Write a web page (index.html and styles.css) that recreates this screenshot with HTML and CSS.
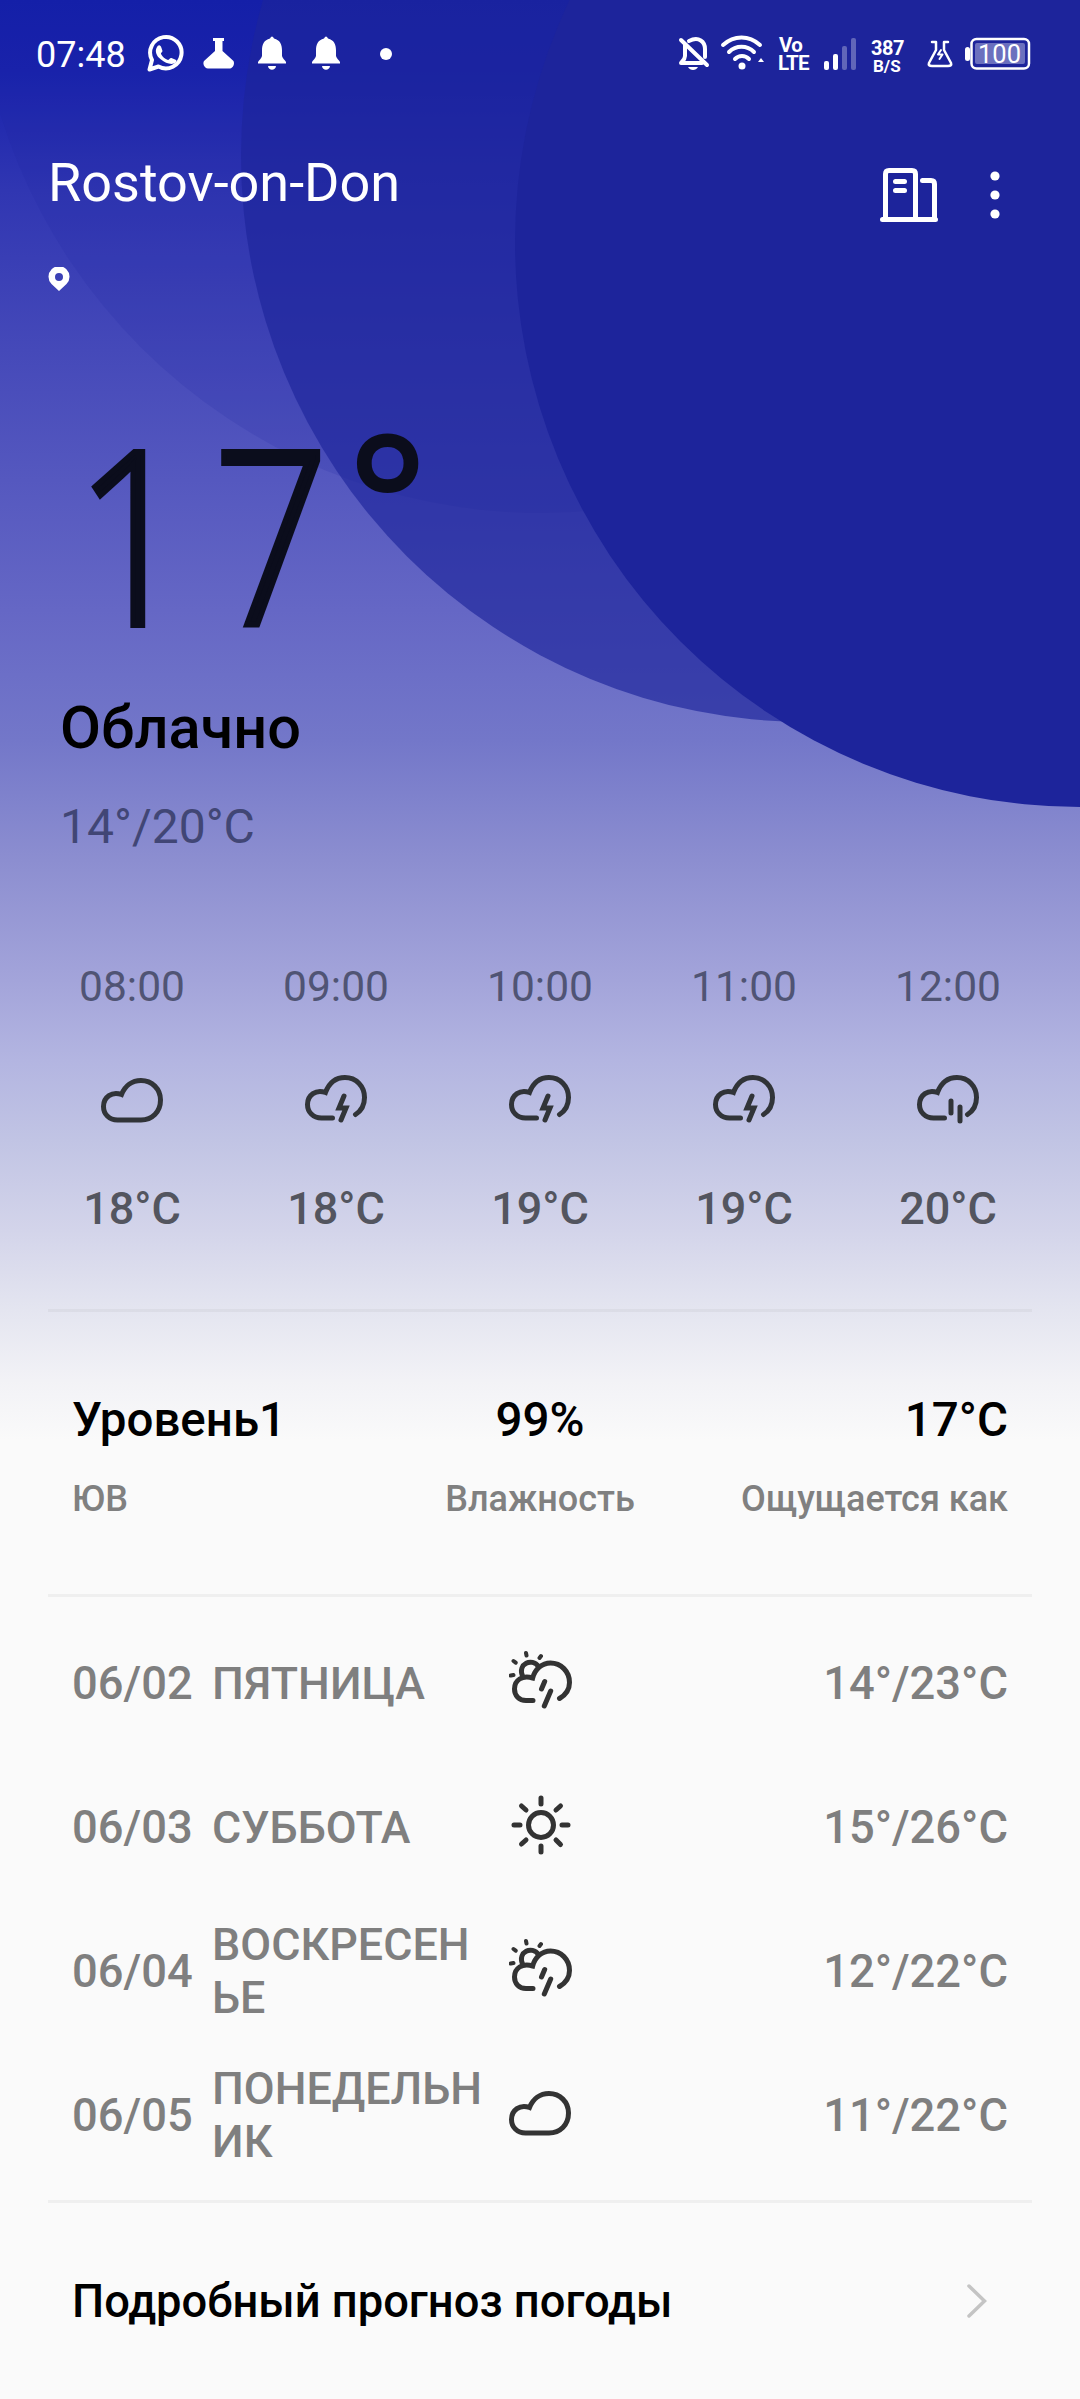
FILE: index.html
```html
<!DOCTYPE html>
<html lang="ru">
<head>
  <meta charset="UTF-8">
  <meta name="viewport" content="width=device-width, initial-scale=1.0">
  <title>Погода</title>
  <link rel="stylesheet" href="styles.css">
</head>
<body>
  <!-- shared weather icons -->
  <svg class="sprite">
    <symbol id="cloud" viewBox="0 0 64 64">
      <path d="M16.500 54 C8 54 2.500 48 2.500 40.500 C2.500 31 11 25 20.500 28.500 C24 20 31 14.500 40 14.500 C51 14.500 59.500 23 59.500 34 C59.500 46 51 54 40 54 Z"/>
    </symbol>
    <symbol id="cloud-open" viewBox="0 0 64 64">
      <path d="M27.500 52H16.500C8 52 2.500 46 2.500 38.500C2.500 29 11 23 20.500 26.500C24 17 31 11.500 40 11.500C51 11.500 59.500 20 59.500 31.500C59.500 39 56 45 50.500 48.500"/>
    </symbol>
    <symbol id="storm" viewBox="0 0 64 64">
      <use href="#cloud-open"/>
      <path d="M39 30l-5 12h7l-5 12"/>
    </symbol>
    <symbol id="rain" viewBox="0 0 64 64">
      <use href="#cloud-open"/>
      <path d="M34 35v12M43 41v14"/>
    </symbol>
    <symbol id="sun-rain" viewBox="0 0 64 64">
      <path d="M24 53.500H17C10 53.500 5.500 48.500 5.500 42C5.500 33 13 28 23.700 31C26 22 33 16 41.500 16C52 16 60.500 24.500 60.500 35.500C60.500 42 56.500 48 50.500 51.500"/>
      <path d="M13.500 29C8.500 16.500 23 10.500 29.500 19.500M35.700 34.500l-3.200 7.500M41.700 44l-6.400 15"/>
      <path class="thin" d="M17 6l.5 2.500M32 9l-1.500 2M4.500 14l2.200 1.700M1.700 28.500l2.800-.5"/>
    </symbol>
    <symbol id="sun" viewBox="0 0 64 64">
      <circle cx="32" cy="34" r="12.500"/>
      <path d="M32 7v6M32 55v6M5 34h6M53 34h6M12.500 15l4.500 4M47 49l4.500 4.500M12.500 53l4.500-4M47 19l4.500-4"/>
    </symbol>
  </svg>

  <div class="app">
    <svg class="bubbles" viewBox="0 0 1080 850">
      <circle class="bubble-far" cx="541" cy="-53" r="566"/>
      <circle class="bubble-mid" cx="807" cy="156" r="566"/>
      <circle class="bubble-near" cx="1080" cy="242" r="565"/>
    </svg>

    <div class="statusbar">
      <span class="clock">07:48</span>
      <svg class="status-left" viewBox="0 0 260 44">
        <path class="line" d="M3.500 37.500l2.500-9.500a15.700 15.700 0 1 1 6.500 6.500z"/>
        <path d="M10.500 16c2-4 4-3 5 0l1 3c0 1-2 2-1.500 3 1.500 3 4 5 7 6 1 0 2-2.500 3.500-2 5 2 6 2 4 4.500-3 3-10 1-14.500-3C10 24 9 19 10.500 16z"/>
        <path d="M67 6h11v3h-1.500v10l11 10c1.500 3-.5 7-3.500 7.500H62c-4-.5-5.500-5-4-7.500l11-10V9h-2z"/>
        <path id="bell" d="M124 6.500q2-4 4 0c6 1.500 8 6 8 12v5c0 3 4 5 4 7v1h-28v-1c0-2 4-4 4-7v-5c0-6 2-10.500 8-12zM122 34h8c-.5 5-7.500 5-8 0z"/>
        <use href="#bell" x="54"/>
        <circle cx="240" cy="22" r="6"/>
      </svg>
      <svg class="status-right" viewBox="0 0 360 48">
        <path class="line" d="M9 13v11c0 4-4 6-4 7h21M13 9c10-5 16 1 16 8v8M5 8l26 25"/>
        <path d="M12 35h10c-2 4-8 4-10 0z"/>
        <path class="line" d="M47 13c11-10 26-10 37 0M53 20c7-7 18-7 25 0M59 27c4-4 10-4 14 0"/>
        <circle cx="66" cy="34" r="3.500"/>
        <path d="M82 30l3-4 3 4z"/>
        <text x="103" y="19.500" class="net">Vo</text>
        <text x="102" y="38" class="net">LTE</text>
        <rect x="148" y="29" width="5" height="9" rx="2"/>
        <rect x="157" y="22" width="5" height="16" rx="2"/>
        <rect class="dim" x="166" y="14" width="5" height="24" rx="2"/>
        <rect class="dim" x="175" y="6" width="5" height="32" rx="2"/>
        <text x="195" y="23" class="speed">387</text>
        <text x="197" y="40" class="unit">B/S</text>
        <path class="line thin" d="M256 10h4v8l-7 13q-1 3 3 3h16q4 0 3-3l-7-13V10h4"/>
        <path class="line spark" d="M265 18l-3 4.500h4.500l-3 4.500"/>
        <rect x="289" y="15" width="5" height="14" rx="2.500"/>
        <rect class="line thin" x="295.500" y="7" width="57.500" height="29.500" rx="5"/>
        <rect class="charge" x="299" y="11" width="50" height="21" rx="2"/>
        <text x="302" y="31" class="level">100</text>
      </svg>
    </div>

    <header class="header">
      <div class="place">
        <h1>Rostov-on-Don</h1>
        <svg class="pin" viewBox="0 0 22 24">
          <path fill-rule="evenodd" d="M11 24L3.500 17A10.500 10.500 0 1 1 18.500 17ZM11 6a4 4 0 1 0 0 8a4 4 0 1 0 0-8z"/>
        </svg>
      </div>
      <div class="actions">
        <svg class="city-icon" viewBox="0 0 58 54">
          <path d="M5.500 51V6q0-3.500 3.500-3.500h23q3.500 0 3.500 3.500V51M42.500 12.500h8.500q3.500 0 3.500 3.500V51M2.500 51.500h53M15.500 13.500h9M15.500 22.500h9"/>
        </svg>
        <svg class="menu-icon" viewBox="0 0 10 48">
          <circle cx="5" cy="5" r="4.600"/>
          <circle cx="5" cy="24" r="4.600"/>
          <circle cx="5" cy="43" r="4.600"/>
        </svg>
      </div>
    </header>

    <section class="current">
      <div class="temp"><span class="digit">1</span><span class="digit">7</span><span class="degree">°</span></div>
      <div class="condition">Облачно</div>
      <div class="range">14°/20°C</div>
    </section>

    <section class="hourly">
      <div class="hour"><span class="time">08:00</span><svg class="icon"><use href="#cloud"/></svg><span class="value">18°C</span></div>
      <div class="hour"><span class="time">09:00</span><svg class="icon"><use href="#storm"/></svg><span class="value">18°C</span></div>
      <div class="hour"><span class="time">10:00</span><svg class="icon"><use href="#storm"/></svg><span class="value">19°C</span></div>
      <div class="hour"><span class="time">11:00</span><svg class="icon"><use href="#storm"/></svg><span class="value">19°C</span></div>
      <div class="hour"><span class="time">12:00</span><svg class="icon"><use href="#rain"/></svg><span class="value">20°C</span></div>
    </section>

    <section class="details">
      <div class="detail"><strong>Уровень1</strong><span>ЮВ</span></div>
      <div class="detail"><strong>99%</strong><span>Влажность</span></div>
      <div class="detail"><strong>17°C</strong><span>Ощущается как</span></div>
    </section>

    <section class="daily">
      <div class="day"><span class="date">06/02</span><span class="name">ПЯТНИЦА</span><svg class="icon"><use href="#sun-rain"/></svg><span class="minmax">14°/23°C</span></div>
      <div class="day"><span class="date">06/03</span><span class="name">СУББОТА</span><svg class="icon"><use href="#sun"/></svg><span class="minmax">15°/26°C</span></div>
      <div class="day"><span class="date">06/04</span><span class="name">ВОСКРЕСЕНЬЕ</span><svg class="icon"><use href="#sun-rain"/></svg><span class="minmax">12°/22°C</span></div>
      <div class="day"><span class="date">06/05</span><span class="name">ПОНЕДЕЛЬНИК</span><svg class="icon"><use href="#cloud"/></svg><span class="minmax">11°/22°C</span></div>
    </section>

    <a class="more">
      <span>Подробный прогноз погоды</span>
      <svg class="chevron" viewBox="0 0 20 34"><path d="M2 2l15.500 15L2 32"/></svg>
    </a>
  </div>
</body>
</html>
```
FILE: styles.css
```css
* {
  box-sizing: border-box;
}
body {
  margin: 0;
  font-family: Roboto, "Noto Sans", sans-serif;
  background: #fafafa;
}
.sprite {
  position: absolute;
  width: 0;
  height: 0;
}
.app {
  position: relative;
  width: 1080px;
  height: 2399px;
  overflow: hidden;
  background: linear-gradient(#131eaa 0, #1822ac 70px, #3036b2 190px, #4549b9 350px, #5558bf 480px, #6567c5 610px, #7377c9 740px, #8c8ed0 860px, #a3a4da 980px, #b3b5e1 1060px, #c1c4e4 1140px, #d3d4ea 1230px, #e4e5f0 1310px, #f2f2f6 1380px, #fafafa 1440px);
}
.bubbles {
  position: absolute;
  top: 0;
  left: 0;
  width: 1080px;
  height: 850px;
}
.bubble-far {
  fill: rgba(28, 36, 160, 0.16);
}
.bubble-mid {
  fill: rgba(29, 36, 155, 0.66);
}
.bubble-near {
  fill: #1d249b;
}

/* status bar */
.statusbar {
  position: relative;
  display: flex;
  align-items: flex-start;
  height: 110px;
  padding: 32px 36px 0;
  color: #fff;
}
.clock {
  width: 110px;
  font-size: 36px;
  line-height: 47px;
}
.statusbar svg {
  fill: #fff;
}
.statusbar .line {
  fill: none;
  stroke: #fff;
  stroke-width: 4;
  stroke-linecap: round;
  stroke-linejoin: round;
}
.statusbar .line.thin {
  stroke-width: 2.5;
}
.statusbar .line.spark {
  stroke-width: 2;
}
.status-left {
  width: 260px;
  height: 44px;
}
.status-right {
  width: 360px;
  height: 48px;
  margin-left: auto;
  margin-right: 8px;
}
.dim {
  opacity: 0.3;
}
.charge {
  opacity: 0.35;
}
.net {
  font-size: 20.5px;
  font-weight: 700;
  letter-spacing: -0.8px;
}
.speed {
  font-size: 20px;
  font-weight: 700;
  letter-spacing: -0.5px;
}
.unit {
  font-size: 17px;
  font-weight: 700;
}
.level {
  font-size: 25.5px;
}

/* city name and actions */
.header {
  position: relative;
  display: flex;
  justify-content: space-between;
  height: 270px;
  padding: 41px 80px 0 48px;
}
.place h1 {
  margin: 0;
  color: #fff;
  font-size: 54px;
  font-weight: 400;
  line-height: 64px;
}
.pin {
  display: block;
  width: 22px;
  height: 24px;
  margin-top: 52px;
  fill: #fff;
}
.actions {
  display: flex;
  align-items: flex-start;
  gap: 52px;
  padding-top: 17px;
}
.city-icon {
  width: 58px;
  height: 54px;
  fill: none;
  stroke: #fff;
  stroke-width: 5;
  stroke-linecap: round;
}
.menu-icon {
  width: 10px;
  height: 48px;
  margin-top: 3px;
  fill: #fff;
}

/* current weather */
.current {
  position: relative;
  height: 560px;
  padding: 0 60px;
}
.temp {
  display: flex;
  height: 313px;
  padding-left: 15px;
  color: #0b0d1c;
  font-family: "Open Sans", sans-serif;
  font-size: 242px;
  font-weight: 300;
  line-height: 302px;
}
.digit {
  width: 138px;
  transform: scaleX(0.84);
  transform-origin: left;
  -webkit-text-stroke: 6px #0b0d1c;
}
.degree {
  margin: -35px 0 0 -3px;
  font-size: 185px;
  font-weight: 600;
}
.condition {
  color: #000;
  font-size: 59.5px;
  font-weight: 500;
  line-height: 70px;
}
.range {
  margin-top: 36px;
  color: #414675;
  font-size: 48px;
  line-height: 56px;
}

/* hourly forecast */
.hourly {
  display: grid;
  grid-template-columns: repeat(5, 204px);
  justify-content: center;
  height: 369px;
  margin: 0 30px;
  padding-top: 19px;
  position: relative;
}
.hour {
  display: flex;
  flex-direction: column;
  align-items: center;
}
.time {
  color: #505474;
  font-size: 42.5px;
  line-height: 56px;
}
.icon {
  width: 64px;
  height: 64px;
  fill: none;
  stroke: #333;
  stroke-width: 5;
  stroke-linecap: round;
}
.thin {
  stroke-width: 4;
}
.hour .icon {
  margin-top: 51px;
  margin-left: 2px;
  stroke: #313438;
}
.value {
  margin-top: 51px;
  color: #53555f;
  font-size: 45px;
  font-weight: 500;
  line-height: 56px;
}

/* wind, humidity, feels like */
.details {
  display: grid;
  grid-template-columns: 1fr 1fr 1fr;
  height: 285px;
  margin: 0 48px;
  padding: 80px 24px 0;
  border-top: 3px solid rgba(0, 0, 0, 0.04);
}
.detail {
  display: flex;
  flex-direction: column;
  align-items: center;
}
.detail:first-child {
  align-items: flex-start;
}
.detail:last-child {
  align-items: flex-end;
}
.detail strong {
  color: #000;
  font-size: 47.5px;
  font-weight: 500;
  line-height: 56px;
}
.detail span {
  margin-top: 28px;
  color: #808080;
  font-size: 36px;
  font-weight: 500;
  line-height: 46px;
}

/* daily forecast */
.daily {
  height: 606px;
  margin: 0 48px;
  padding: 14px 24px 0;
  border-top: 3px solid #efefef;
}
.day {
  display: flex;
  align-items: center;
  height: 144px;
  color: #7f7f7f;
  font-size: 45.3px;
  font-weight: 500;
  line-height: 53px;
}
.date {
  width: 140px;
}
.name {
  width: 278px;
  margin-right: 19px;
  font-size: 44.8px;
  word-break: break-all;
}
.day .icon {
  margin-bottom: 8px;
}
.minmax {
  margin-left: auto;
}

.more {
  display: flex;
  align-items: center;
  justify-content: space-between;
  height: 199px;
  margin: 0 48px;
  padding: 0 45px 0 24px;
  border-top: 3px solid #efefef;
  color: #000;
  font-size: 45.3px;
  font-weight: 500;
}
.chevron {
  width: 20px;
  height: 34px;
  fill: none;
  stroke: #c4c4c4;
  stroke-width: 3.5;
  stroke-linecap: round;
}
```
